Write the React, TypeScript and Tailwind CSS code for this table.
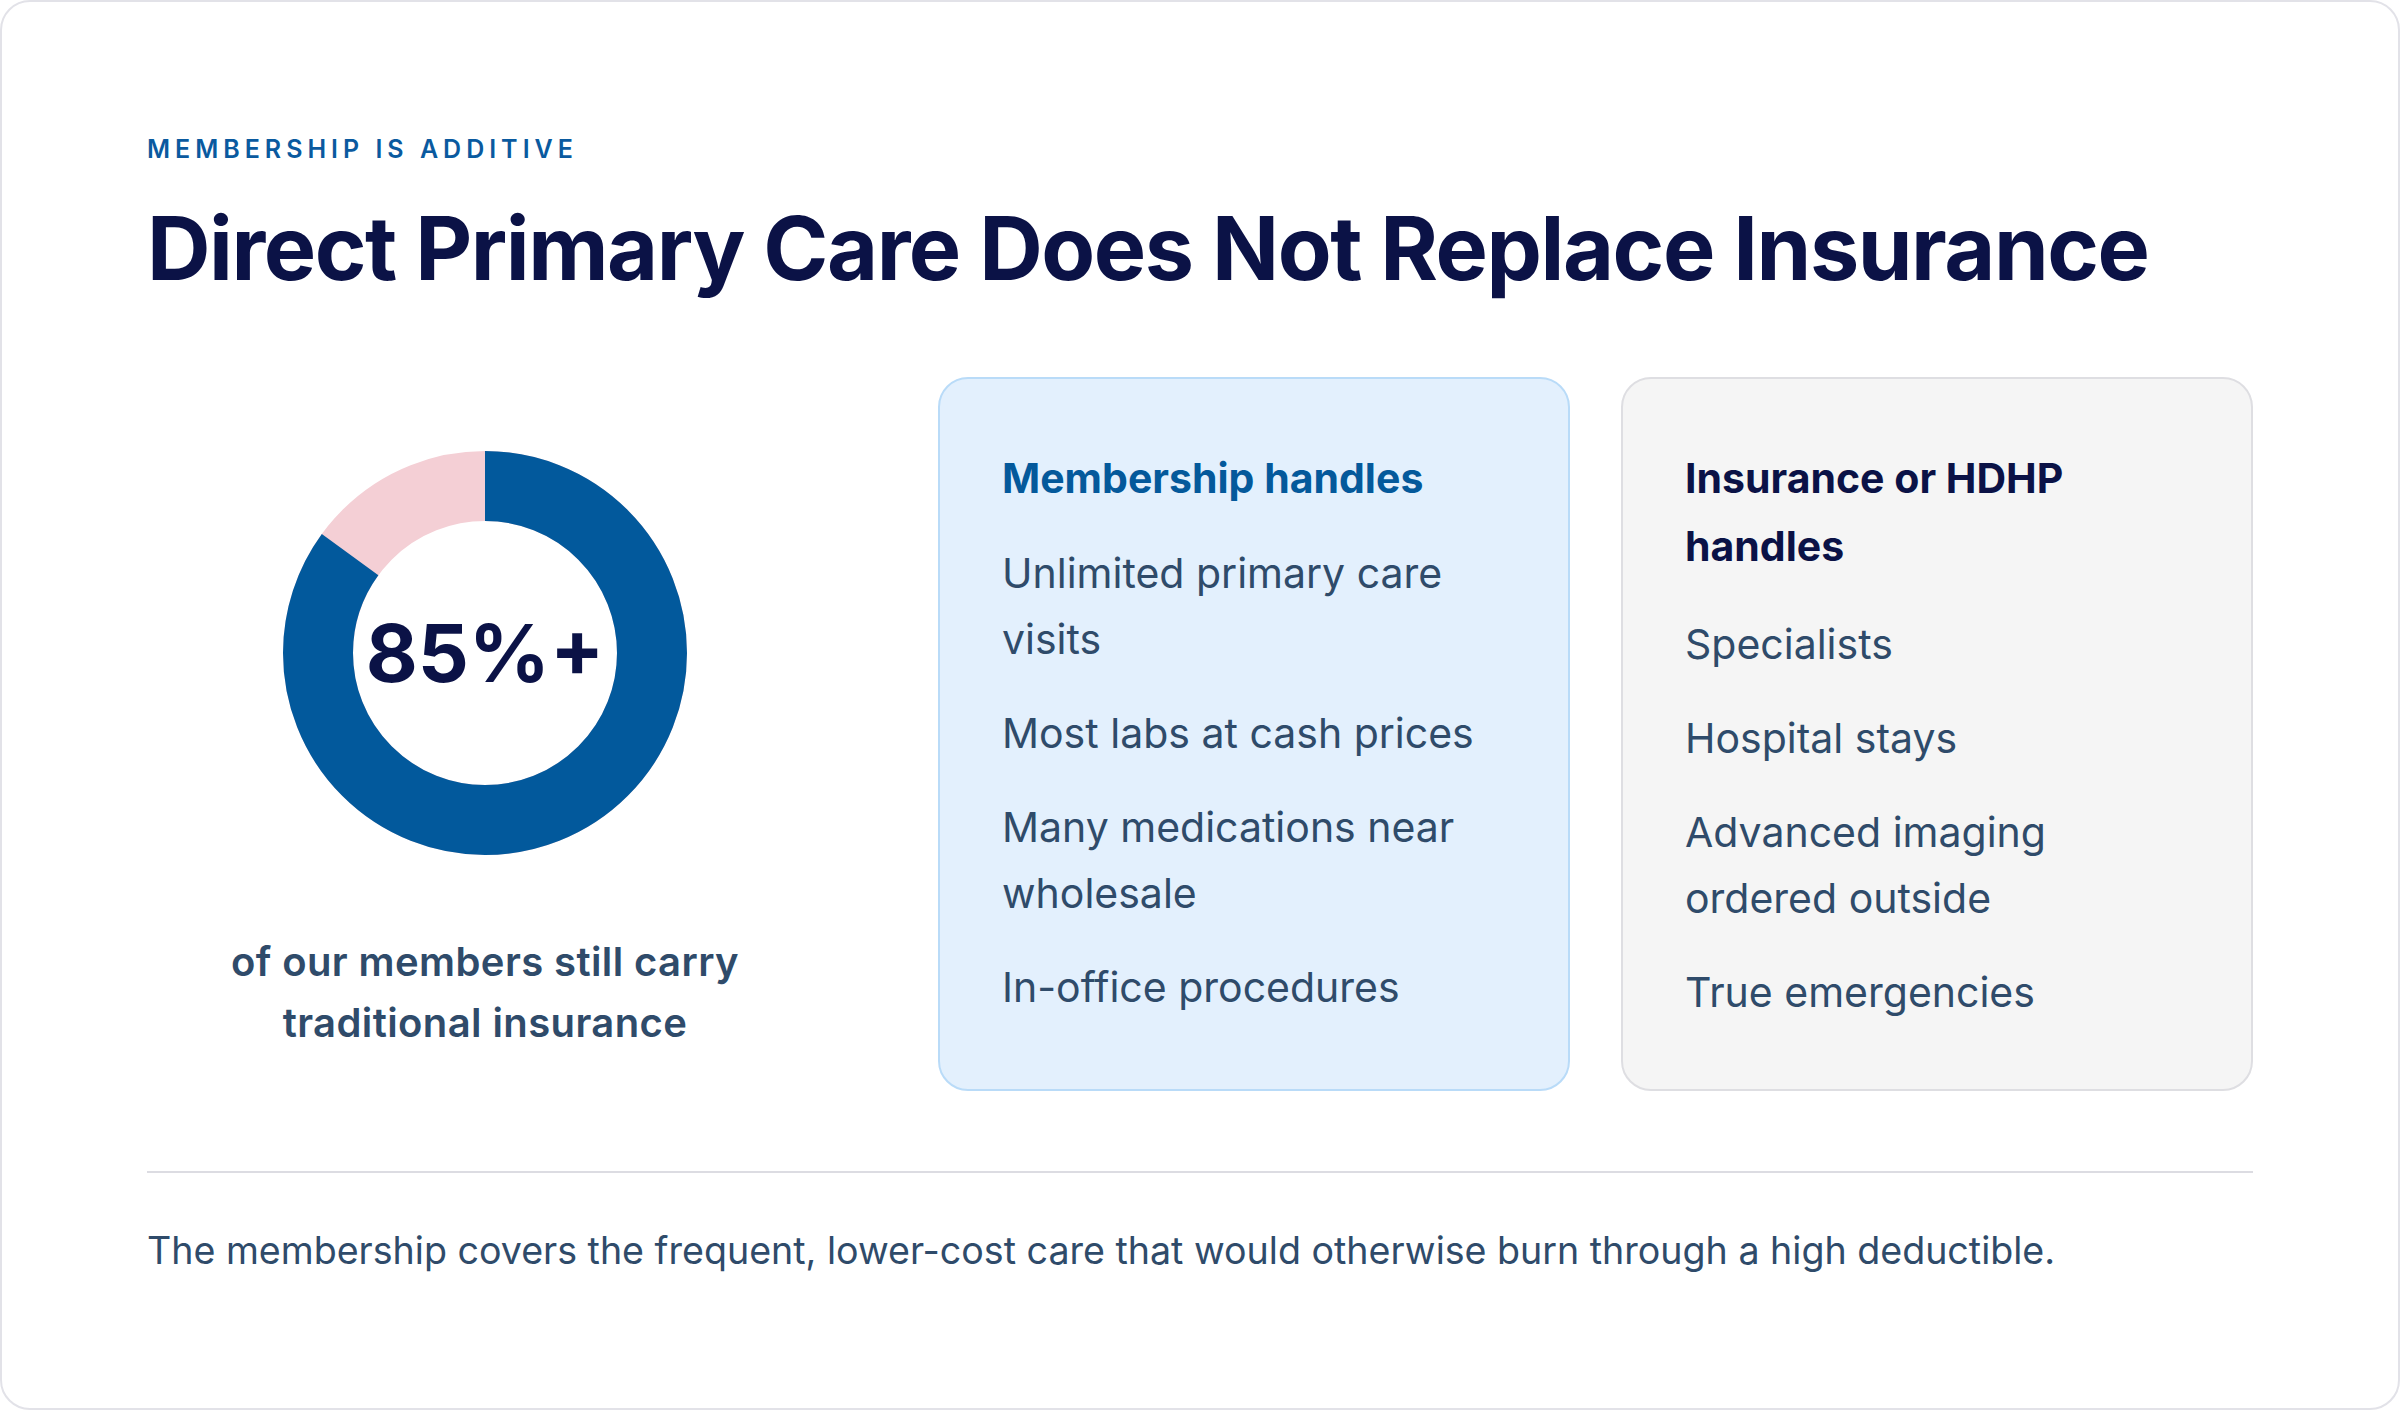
const membership = [
  "Unlimited primary care visits",
  "Most labs at cash prices",
  "Many medications near wholesale",
  "In-office procedures",
];

const insurance = [
  "Specialists",
  "Hospital stays",
  "Advanced imaging ordered outside",
  "True emergencies",
];

function Donut() {
  const r = 167;
  const c = 2 * Math.PI * r;
  return (
    <svg width="404" height="404" viewBox="0 0 404 404" className="block">
      <circle cx="202" cy="202" r={r} fill="none" stroke="#f4cfd5" strokeWidth="70" />
      <circle
        cx="202"
        cy="202"
        r={r}
        fill="none"
        stroke="#02599c"
        strokeWidth="70"
        strokeDasharray={`${c * 0.85} ${c}`}
        transform="rotate(-90 202 202)"
      />
    </svg>
  );
}

export default function App() {
  return (
    <div className="min-h-screen bg-white font-['Inter',sans-serif]">
      <div className="h-[1410px] rounded-[30px] border-2 border-[#e2e2e8] bg-white px-[145px] pt-[132px]">
        <p className="text-[25px] font-semibold leading-[30px] tracking-[0.2em] text-[#0a5a9f]">
          MEMBERSHIP IS ADDITIVE
        </p>
        <h1 className="mt-[34px] text-[88px] font-bold leading-[101px] tracking-[-0.0165em] text-[#0b1246]">
          Direct Primary Care Does Not Replace Insurance
        </h1>

        <div className="mt-[78px] grid grid-cols-[740px_1fr_1fr] gap-x-[51px]">
          <div className="flex w-[676px] flex-col items-center pt-[74px]">
            <div className="relative">
              <Donut />
              <div className="absolute inset-0 flex items-center justify-center text-[80px] font-bold text-[#0b1246]">
                85%+
              </div>
            </div>
            <p className="mt-[76px] text-center text-[40px] font-semibold leading-[61px] tracking-[0.01em] text-[#2f4b6a]">
              of our members still carry
              <br />
              traditional insurance
            </p>
          </div>

          <div className="rounded-[30px] border-2 border-[#b9dbf8] bg-[#e3f0fd] px-[62px] pt-[65px] pb-[64px]">
            <div className="flex flex-col gap-[28px]">
              <h2 className="text-[41px] font-bold leading-[68px] text-[#04599b]">Membership handles</h2>
              {membership.map((item) => (
                <p key={item} className="text-[41px] leading-[66px] text-[#2f4b6a]">
                  {item}
                </p>
              ))}
            </div>
          </div>

          <div className="rounded-[30px] border-2 border-[#dedee2] bg-[#f5f5f5] px-[62px] pt-[65px] pb-[64px]">
            <div className="flex flex-col gap-[28px]">
              <h2 className="mb-[3px] text-[41px] font-bold leading-[68px] text-[#0b1246]">Insurance or HDHP handles</h2>
              {insurance.map((item) => (
                <p key={item} className="text-[41px] leading-[66px] text-[#2f4b6a]">
                  {item}
                </p>
              ))}
            </div>
          </div>
        </div>

        <div className="mt-[80px] h-[2px] bg-[#dcdce2]" />
        <p className="mt-[49px] text-[37.6px] leading-[57px] text-[#2f4b6a]">
          The membership covers the frequent, lower-cost care that would otherwise burn through a high deductible.
        </p>
      </div>
    </div>
  );
}
